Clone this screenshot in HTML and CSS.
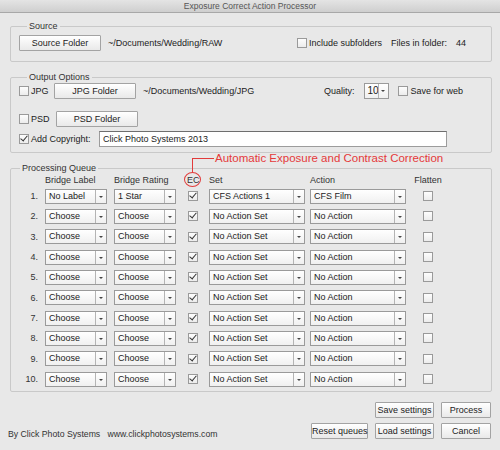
FILE: index.html
```html
<!DOCTYPE html>
<html lang="en">
<head>
  <meta charset="UTF-8">
  <title>Exposure Correct Action Processor</title>
  <link rel="stylesheet" href="styles.css">
</head>
<body>

<div class="titlebar">Exposure Correct Action Processor</div>

<div class="content">

  <!-- Source -->
  <fieldset class="group source">
    <legend>Source</legend>
    <div class="line">
      <button class="btn folder-btn">Source Folder</button>
      <span class="path">~/Documents/Wedding/RAW</span>
      <span class="right">
        <span class="check"></span><span class="lbl">Include subfolders</span>
        <span class="files">Files in folder:</span>
        <span class="count">44</span>
      </span>
    </div>
  </fieldset>

  <!-- Output Options -->
  <fieldset class="group output">
    <legend>Output Options</legend>
    <div class="line">
      <span class="check"></span><span class="lbl short">JPG</span>
      <button class="btn folder-btn">JPG Folder</button>
      <span class="path">~/Documents/Wedding/JPG</span>
      <span class="right">
        <span class="quality">Quality:</span>
        <span class="select tiny"><span class="val">10</span><span class="arrow"></span></span>
        <span class="check"></span><span class="lbl">Save for web</span>
      </span>
    </div>
    <div class="line psd">
      <span class="check"></span><span class="lbl short">PSD</span>
      <button class="btn folder-btn">PSD Folder</button>
    </div>
    <div class="line copy">
      <span class="check on"></span><span class="lbl copy-lbl">Add Copyright:</span>
      <span class="textbox">Click Photo Systems 2013</span>
    </div>
  </fieldset>

  <!-- Processing Queue -->
  <fieldset class="group queue">
    <legend>Processing Queue</legend>
    <div class="qgrid">
      <span></span>
      <span class="head">Bridge Label</span>
      <span class="head">Bridge Rating</span>
      <span class="head ec">EC</span>
      <span class="head">Set</span>
      <span class="head">Action</span>
      <span class="head center">Flatten</span>

      <span class="num">1.</span>
      <span class="select"><span class="val">No Label</span><span class="arrow"></span></span>
      <span class="select"><span class="val">1 Star</span><span class="arrow"></span></span>
      <span class="cell-ec"><span class="check on"></span></span>
      <span class="select wide"><span class="val">CFS Actions 1</span><span class="arrow"></span></span>
      <span class="select wide"><span class="val">CFS Film</span><span class="arrow"></span></span>
      <span class="center"><span class="check"></span></span>

      <span class="num">2.</span>
      <span class="select"><span class="val">Choose</span><span class="arrow"></span></span>
      <span class="select"><span class="val">Choose</span><span class="arrow"></span></span>
      <span class="cell-ec"><span class="check on"></span></span>
      <span class="select wide"><span class="val">No Action Set</span><span class="arrow"></span></span>
      <span class="select wide"><span class="val">No Action</span><span class="arrow"></span></span>
      <span class="center"><span class="check"></span></span>

      <span class="num">3.</span>
      <span class="select"><span class="val">Choose</span><span class="arrow"></span></span>
      <span class="select"><span class="val">Choose</span><span class="arrow"></span></span>
      <span class="cell-ec"><span class="check on"></span></span>
      <span class="select wide"><span class="val">No Action Set</span><span class="arrow"></span></span>
      <span class="select wide"><span class="val">No Action</span><span class="arrow"></span></span>
      <span class="center"><span class="check"></span></span>

      <span class="num">4.</span>
      <span class="select"><span class="val">Choose</span><span class="arrow"></span></span>
      <span class="select"><span class="val">Choose</span><span class="arrow"></span></span>
      <span class="cell-ec"><span class="check on"></span></span>
      <span class="select wide"><span class="val">No Action Set</span><span class="arrow"></span></span>
      <span class="select wide"><span class="val">No Action</span><span class="arrow"></span></span>
      <span class="center"><span class="check"></span></span>

      <span class="num">5.</span>
      <span class="select"><span class="val">Choose</span><span class="arrow"></span></span>
      <span class="select"><span class="val">Choose</span><span class="arrow"></span></span>
      <span class="cell-ec"><span class="check on"></span></span>
      <span class="select wide"><span class="val">No Action Set</span><span class="arrow"></span></span>
      <span class="select wide"><span class="val">No Action</span><span class="arrow"></span></span>
      <span class="center"><span class="check"></span></span>

      <span class="num">6.</span>
      <span class="select"><span class="val">Choose</span><span class="arrow"></span></span>
      <span class="select"><span class="val">Choose</span><span class="arrow"></span></span>
      <span class="cell-ec"><span class="check on"></span></span>
      <span class="select wide"><span class="val">No Action Set</span><span class="arrow"></span></span>
      <span class="select wide"><span class="val">No Action</span><span class="arrow"></span></span>
      <span class="center"><span class="check"></span></span>

      <span class="num">7.</span>
      <span class="select"><span class="val">Choose</span><span class="arrow"></span></span>
      <span class="select"><span class="val">Choose</span><span class="arrow"></span></span>
      <span class="cell-ec"><span class="check on"></span></span>
      <span class="select wide"><span class="val">No Action Set</span><span class="arrow"></span></span>
      <span class="select wide"><span class="val">No Action</span><span class="arrow"></span></span>
      <span class="center"><span class="check"></span></span>

      <span class="num">8.</span>
      <span class="select"><span class="val">Choose</span><span class="arrow"></span></span>
      <span class="select"><span class="val">Choose</span><span class="arrow"></span></span>
      <span class="cell-ec"><span class="check on"></span></span>
      <span class="select wide"><span class="val">No Action Set</span><span class="arrow"></span></span>
      <span class="select wide"><span class="val">No Action</span><span class="arrow"></span></span>
      <span class="center"><span class="check"></span></span>

      <span class="num">9.</span>
      <span class="select"><span class="val">Choose</span><span class="arrow"></span></span>
      <span class="select"><span class="val">Choose</span><span class="arrow"></span></span>
      <span class="cell-ec"><span class="check on"></span></span>
      <span class="select wide"><span class="val">No Action Set</span><span class="arrow"></span></span>
      <span class="select wide"><span class="val">No Action</span><span class="arrow"></span></span>
      <span class="center"><span class="check"></span></span>

      <span class="num">10.</span>
      <span class="select"><span class="val">Choose</span><span class="arrow"></span></span>
      <span class="select"><span class="val">Choose</span><span class="arrow"></span></span>
      <span class="cell-ec"><span class="check on"></span></span>
      <span class="select wide"><span class="val">No Action Set</span><span class="arrow"></span></span>
      <span class="select wide"><span class="val">No Action</span><span class="arrow"></span></span>
      <span class="center"><span class="check"></span></span>
    </div>
  </fieldset>

  <!-- Bottom buttons -->
  <div class="bottom">
    <div class="credit">By Click Photo Systems&nbsp;&nbsp;&nbsp;www.clickphotosystems.com</div>
    <div class="actions">
      <div class="btn-row">
        <button class="btn b-save">Save settings</button>
        <button class="btn b-go">Process</button>
      </div>
      <div class="btn-row">
        <button class="btn b-reset">Reset queues</button>
        <button class="btn b-save">Load settings</button>
        <button class="btn b-go">Cancel</button>
      </div>
    </div>
  </div>

</div>

<!-- Red annotation over the EC column -->
<div class="note">
  <span class="note-circle"></span>
  <span class="note-line"></span>
  <span class="note-text">Automatic Exposure and Contrast Correction</span>
</div>

</body>
</html>
```

FILE: styles.css
```css
/* Window */
body {
  margin: 0;
  width: 500px;
  height: 450px;
  overflow: hidden;
  position: relative;
  background-color: #e8e8e8;
  font-family: "Liberation Sans", Arial, sans-serif;
  font-size: 9px;
  color: #222;
}

.titlebar {
  height: 12px;
  line-height: 12px;
  text-align: center;
  font-size: 8.5px;
  color: #555;
  background: linear-gradient(#e4e4e4, #cfcfcf);
  border-bottom: 1px solid #a8a8a8;
}

.content {
  padding: 8px 8px 0 10px;
}

/* Group boxes */
.group {
  margin: 0;
  padding: 0;
  border: 1px solid #c9c9c9;
  border-radius: 2px;
  min-width: 0;
}

.group legend {
  margin-left: 8px;
  padding: 0 2px;
  font-size: 9px;
  line-height: 10px;
  color: #333;
}

.source {
  padding: 4px 25px 10px 8px;
}

.output {
  margin-top: 10px;
  padding: 1px 28px 5px 8px;
}

.queue {
  margin-top: 10px;
  padding: 1px 0 2px 1px;
}

.line {
  display: flex;
  align-items: center;
  height: 16px;
}

.right {
  margin-left: auto;
  display: flex;
  align-items: center;
}

.path {
  margin-left: 7px;
  color: #222;
}

.files {
  margin-left: 9px;
}

.count {
  margin-left: 9px;
}

.quality {
  margin-right: 10px;
}

.lbl {
  margin-left: 2px;
}

.short {
  width: 20px;
}

.psd {
  margin-top: 12px;
}

.copy {
  margin-top: 4px;
}

.copy-lbl {
  width: 68px;
}

/* Buttons */
.btn {
  height: 16px;
  padding: 0;
  white-space: nowrap;
  font-family: "Liberation Sans", Arial, sans-serif;
  font-size: 9px;
  color: #222;
  background: linear-gradient(#ffffff, #e9e9e9);
  border: 1px solid #a3a3a3;
  border-radius: 1px;
}

.folder-btn {
  width: 82px;
  flex: none;
}

.output .folder-btn {
  margin-left: 3px;
}

.psd .folder-btn {
  margin-left: 5px;
}

/* Checkboxes */
.check {
  display: inline-block;
  position: relative;
  width: 8px;
  height: 8px;
  border: 1px solid #9a9a9a;
  background: linear-gradient(#fdfdfd, #ececec);
  flex: none;
}

.check.on::after {
  content: "";
  position: absolute;
  left: 2px;
  top: -1px;
  width: 3px;
  height: 6px;
  border: solid #333;
  border-width: 0 1.5px 1.5px 0;
  transform: rotate(40deg);
}

.right .check {
  margin-left: 9px;
}

/* Text field */
.textbox {
  flex: none;
  box-sizing: border-box;
  width: 348px;
  height: 16px;
  line-height: 14px;
  padding-left: 3px;
  background-color: #fff;
  border: 1px solid #9c9c9c;
  border-top-color: #6e6e6e;
}

/* Drop downs */
.select {
  display: flex;
  align-items: stretch;
  flex: none;
  width: 62px;
  height: 15px;
  box-sizing: border-box;
  background: linear-gradient(#ffffff, #f0f0f0);
  border: 1px solid #9a9a9a;
}

.select .val {
  flex: 1;
  min-width: 0;
  padding-left: 3px;
  line-height: 13px;
  white-space: nowrap;
  overflow: hidden;
}

.select .arrow {
  flex: none;
  width: 10px;
  border-left: 1px solid #b4b4b4;
  position: relative;
}

.select .arrow::after {
  content: "";
  position: absolute;
  left: 3px;
  top: 6px;
  border-left: 2px solid transparent;
  border-right: 2px solid transparent;
  border-top: 2px solid #444;
}

.select.wide {
  width: 96px;
}

.select.tiny {
  width: 25px;
  height: 16px;
}

.select.tiny .val {
  padding-left: 2px;
  line-height: 14px;
  font-size: 10px;
}

.select.tiny .arrow {
  width: 9px;
}

.select.tiny .arrow::after {
  left: 2px;
}

/* Queue grid */
.qgrid {
  display: grid;
  grid-template-columns: 33px 69px 69px 26px 101px 96px 44px;
  grid-template-rows: 12px;
  grid-auto-rows: 20.33px;
  align-items: center;
}

.head {
  color: #333;
  line-height: 12px;
}

.head.ec {
  padding-left: 4px;
}

.num {
  text-align: right;
  padding-right: 7px;
  color: #333;
}

.cell-ec {
  padding-left: 5px;
  display: flex;
}

.center {
  display: flex;
  justify-content: center;
  text-align: center;
}

/* Bottom area */
.bottom {
  display: flex;
  justify-content: space-between;
  align-items: flex-end;
  margin-top: 10px;
  margin-left: -2px;
  padding-right: 1px;
}

.credit {
  color: #333;
  font-size: 8.7px;
}

.actions {
  display: flex;
  flex-direction: column;
  align-items: flex-end;
  gap: 5px;
}

.btn-row {
  display: flex;
  gap: 7px;
}

.b-save {
  width: 59px;
}

.b-go {
  width: 50px;
}

.b-reset {
  width: 57px;
}

/* Annotation */
.note {
  position: absolute;
  left: 0;
  top: 0;
}

.note-circle {
  position: absolute;
  left: 184px;
  top: 172px;
  width: 15px;
  height: 13px;
  border: 1.5px solid #e23b3b;
  border-radius: 50%;
}

.note-line {
  position: absolute;
  left: 192px;
  top: 158px;
  width: 21px;
  height: 14px;
  border-left: 1.5px solid #e23b3b;
  border-top: 1.5px solid #e23b3b;
}

.note-text {
  position: absolute;
  left: 215px;
  top: 151px;
  white-space: nowrap;
  font-size: 11.5px;
  line-height: 14px;
  color: #e5393a;
}
```
